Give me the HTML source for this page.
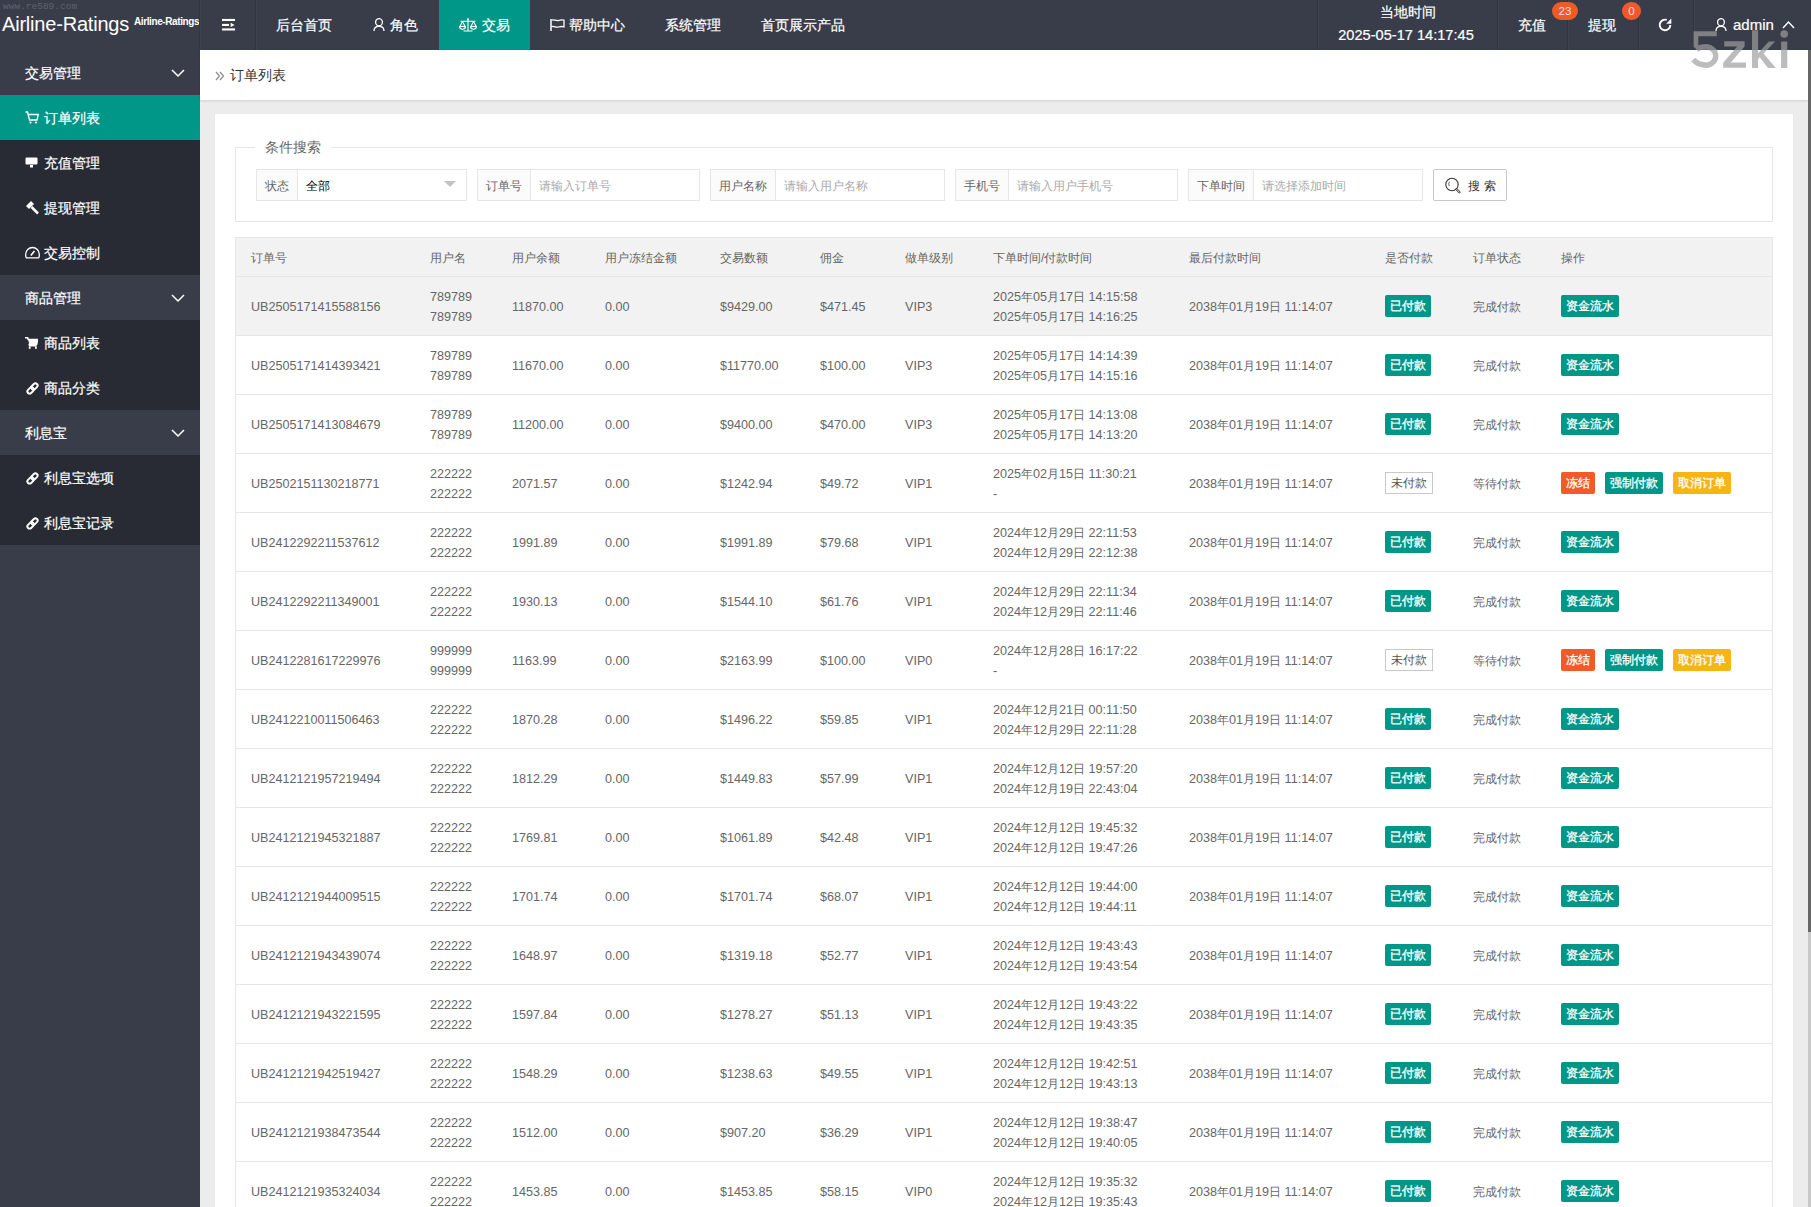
<!DOCTYPE html>
<html><head><meta charset="utf-8"><style>
*{margin:0;padding:0;box-sizing:border-box}
html,body{width:1811px;height:1207px;overflow:hidden;background:#ececec;font-family:"Liberation Sans",sans-serif;}
.abs{position:absolute}
#hdr{position:absolute;left:0;top:0;width:1811px;height:50px;background:#393d49;color:#fff}
#hdr .sep{position:absolute;top:0;width:1px;height:50px;background:#32353f;box-shadow:1px 0 0 #3f434e}
#hdr .nav{position:absolute;top:0;height:50px;line-height:50px;font-size:14px;color:#fff;white-space:nowrap;-webkit-text-stroke:0.2px #fff}
#logo{position:absolute;left:2px;top:13px;font-size:20px;color:#fff;white-space:nowrap;letter-spacing:-0.2px}
#logo2{position:absolute;left:134px;top:15.5px;font-size:10px;font-weight:bold;color:#fff;white-space:nowrap;letter-spacing:-0.4px}
#wm1{position:absolute;left:3px;top:1px;font-family:"Liberation Mono",monospace;font-size:9.5px;color:#5e626d;white-space:nowrap}
.badge{position:absolute;z-index:5;top:2px;height:18px;border-radius:9px;background:#ee5a28;color:#fde;font-size:11.5px;line-height:19px;text-align:center}
#side{position:absolute;left:0;top:50px;width:200px;height:1157px;background:#393d49}
.mi{position:absolute;left:0;width:200px;height:45px;line-height:45px;font-size:14px;color:#fff;white-space:nowrap;-webkit-text-stroke:0.2px #fff}
.mi.g{background:#393d49}
.mi.s{background:#282b33}
.mi.act{background:#009688}
.mi .t{position:absolute;left:25px;top:1px}
.mi .ts{position:absolute;left:44px;top:1px}
.mi svg{position:absolute}
#main{position:absolute;left:200px;top:50px;width:1608px;height:1157px;background:#ececec;overflow:hidden}
#crumb{position:absolute;left:200px;top:50px;width:1608px;height:50px;background:#fff;box-shadow:0 1px 2px rgba(0,0,0,.12)}
#crumb .t{position:absolute;left:30px;top:0;line-height:50px;font-size:14px;color:#333}
#card{position:absolute;left:215px;top:114px;width:1578px;height:1100px;background:#fff;box-shadow:0 0 1px rgba(0,0,0,.08)}
#fs{position:absolute;left:235px;top:147px;width:1538px;height:75px;border:1px solid #e6e6e6}
#legend{position:absolute;left:255px;top:137px;padding:0 10px;background:#fff;font-size:14px;line-height:20px;color:#666}
.lab{position:absolute;top:169px;height:32px;border:1px solid #e6e6e6;background:#fbfbfb;font-size:12px;line-height:32px;color:#666;text-align:center;white-space:nowrap}
.inp{position:absolute;top:169px;height:32px;border:1px solid #e6e6e6;border-left:none;background:#fff;font-size:12px;line-height:32px;color:#aaa;padding-left:8px;white-space:nowrap}
#sbtn{position:absolute;left:1433px;top:169px;width:74px;height:32px;border:1px solid #c9c9c9;background:#fff;font-size:12px;line-height:30px;color:#333;border-radius:2px}
#tbl{position:absolute;left:235px;top:237px;width:1538px;height:1000px;border:1px solid #e6e6e6;border-bottom:none}
#thead{position:absolute;left:235px;top:237px;width:1538px;height:40px;background:#f2f2f2;border:1px solid #e6e6e6}
.th{position:absolute;top:1px;line-height:38px;font-size:12px;color:#666;white-space:nowrap}
.tr{position:absolute;left:235px;width:1538px;height:59px;border:1px solid #e6e6e6;border-top:none;background:#fff}
.tr.hover{background:#f2f2f2}
.td{position:absolute;top:1px;line-height:58px;font-size:12.6px;color:#666;white-space:nowrap}
.td.two{line-height:20px;top:9.5px}
.td i,.td.cj{font-style:normal;font-size:12px}
.btn{position:absolute;top:18px;height:22px;line-height:22px;font-size:12px;-webkit-text-stroke:0.3px currentColor;color:#fff;text-align:center;border-radius:2px;white-space:nowrap}
.bg{background:#009688}
.br{background:#f25a29}
.by{background:#f7b515}
.bp{background:#fff;border:1px solid #c9c9c9;color:#555;line-height:20px;border-radius:0;-webkit-text-stroke:0}
#sb{position:absolute;left:1808px;top:50px;width:3px;height:1157px;background:#c8c8c8}
#sbt{position:absolute;left:1808px;top:50px;width:3px;height:882px;background:#666}

</style></head><body>
<div id="hdr">
  <div id="wm1">www.re589.com</div>
  <div id="logo">Airline-Ratings</div>
  <div id="logo2">Airline-Ratings</div>
  <div class="sep" style="left:199px"></div>
  <div class="sep" style="left:255px"></div>
  <svg class="abs" style="left:222px;top:18px" width="14" height="14" viewBox="0 0 14 14"><rect x="0" y="0.9" width="13" height="2.1" fill="#fff"/><rect x="0" y="5.9" width="7" height="2.1" fill="#fff"/><rect x="0" y="10.4" width="13" height="2.1" fill="#fff"/><path d="M8.6 4.8 L12.6 6.9 L8.6 9 Z" fill="#fff"/></svg>
  <div class="nav" style="left:276px">后台首页</div>
  <svg class="abs" style="left:373px;top:18px" width="12" height="13" viewBox="0 0 12 13"><ellipse cx="6" cy="4.2" rx="3.4" ry="3.6" fill="none" stroke="#fff" stroke-width="1.3"/><path d="M1 13 C1 9.5 3 8.3 6 8.3 C9 8.3 11 9.5 11 13" fill="none" stroke="#fff" stroke-width="1.3"/></svg>
  <div class="nav" style="left:390px">角色</div>
  <div class="abs" style="left:439px;top:0;width:91px;height:50px;background:#009688"></div>
  <svg class="abs" style="left:459px;top:18px" width="18" height="14" viewBox="0 0 18 14"><circle cx="9" cy="1.3" r="1.1" fill="#fff"/><path d="M9 2 V12.8 M4.5 13 H13.5 M1.5 3.3 H16.5 M3.5 3.5 L0.9 8.5 M3.5 3.5 L6.1 8.5 M14.5 3.5 L11.9 8.5 M14.5 3.5 L17.1 8.5" fill="none" stroke="#fff" stroke-width="1.1"/><path d="M0.6 8.5 H6.4 A2.9 2.7 0 0 1 0.6 8.5 Z M11.6 8.5 H17.4 A2.9 2.7 0 0 1 11.6 8.5 Z" fill="none" stroke="#fff" stroke-width="1.1"/></svg>
  <div class="nav" style="left:482px">交易</div>
  <svg class="abs" style="left:550px;top:19px" width="15" height="12" viewBox="0 0 15 12"><path d="M1 0 V12" stroke="#fff" stroke-width="1.5"/><path d="M1.5 1 C4 0 6 2.2 8.5 1.5 C10.5 0.8 12 0.8 14 1.2 V7.8 C12 7.2 10.5 7.4 8.5 8 C6 8.8 4 6.8 1.5 7.6" fill="none" stroke="#fff" stroke-width="1.3"/></svg>
  <div class="nav" style="left:569px">帮助中心</div>
  <div class="nav" style="left:665px">系统管理</div>
  <div class="nav" style="left:761px">首页展示产品</div>
  <div class="sep" style="left:1317px"></div>
  <div class="nav" style="left:1318px;width:180px;text-align:center;line-height:20px;top:2px">当地时间</div>
  <div class="nav" style="left:1316px;width:180px;text-align:center;line-height:20px;top:25px;font-size:14.6px">2025-05-17 14:17:45</div>
  <div class="sep" style="left:1497px"></div>
  <div class="nav" style="left:1518px">充值</div>
  <div class="badge" style="left:1552px;width:26px">23</div>
  <div class="sep" style="left:1567px"></div>
  <div class="nav" style="left:1588px">提现</div>
  <div class="badge" style="left:1622px;width:19px">0</div>
  <div class="sep" style="left:1638px"></div>
  <svg class="abs" style="left:1657px;top:17px" width="16" height="16" viewBox="0 0 16 16"><path d="M13.3 7.9 A5.3 5.3 0 1 1 9.7 2.9" fill="none" stroke="#fff" stroke-width="1.9"/><path d="M14.3 1.6 V6.7 H9.2 Z" fill="#fff"/></svg>
  <div class="sep" style="left:1693px"></div>
  <svg class="abs" style="left:1715px;top:18px" width="12" height="13" viewBox="0 0 12 13"><ellipse cx="6" cy="4.2" rx="3.4" ry="3.6" fill="none" stroke="#fff" stroke-width="1.3"/><path d="M1 13 C1 9.5 3 8.3 6 8.3 C9 8.3 11 9.5 11 13" fill="none" stroke="#fff" stroke-width="1.3"/></svg>
  <div class="nav" style="left:1733px;font-size:15px">admin</div>
  <svg class="abs" style="left:1782px;top:20px" width="13" height="9" viewBox="0 0 13 9"><path d="M1 8 L6.5 2 L12 8" fill="none" stroke="#fff" stroke-width="1.4"/></svg>
</div>
<div id="side">
  <div class="mi g" style="top:0"><span class="t">交易管理</span><svg style="left:171px;top:19px" width="14" height="9" viewBox="0 0 14 9"><path d="M1 1 L7 7 L13 1" fill="none" stroke="#fff" stroke-width="1.5"/></svg></div>
  <div class="mi act" style="top:45px"><svg style="left:25px;top:16px" width="14" height="13" viewBox="0 0 14 13"><path d="M0.5 1 H2.5 L4.5 9 H12 L13.3 3.5 H3.5" fill="none" stroke="#fff" stroke-width="1.3"/><circle cx="5.5" cy="11.5" r="1.1" fill="#fff"/><circle cx="11" cy="11.5" r="1.1" fill="#fff"/></svg><span class="ts">订单列表</span></div>
  <div class="mi s" style="top:90px"><svg style="left:25px;top:17px" width="13" height="11" viewBox="0 0 13 11"><rect x="0.5" y="0.5" width="12" height="7" rx="1" fill="#fff"/><rect x="5" y="8" width="3" height="2.5" fill="#fff"/></svg><span class="ts">充值管理</span></div>
  <div class="mi s" style="top:135px"><svg style="left:25px;top:16px" width="14" height="14" viewBox="0 0 14 14"><path d="M1 5 L6 0 L9 3 L4 8 Z" fill="#fff"/><path d="M6.5 6 L13 12.5" stroke="#fff" stroke-width="2.5"/></svg><span class="ts">提现管理</span></div>
  <div class="mi s" style="top:180px"><svg style="left:25px;top:16px" width="15" height="13" viewBox="0 0 15 13"><path d="M1.3 11.8 C0.5 10.8 0.7 9.5 0.7 8.3 A6.8 6.8 0 0 1 14.3 8.3 C14.3 9.5 14.5 10.8 13.7 11.8 Z" fill="none" stroke="#fff" stroke-width="1.3"/><path d="M5.8 9.5 L9.5 5" stroke="#fff" stroke-width="1.6"/></svg><span class="ts">交易控制</span></div>
  <div class="mi g" style="top:225px"><span class="t">商品管理</span><svg style="left:171px;top:19px" width="14" height="9" viewBox="0 0 14 9"><path d="M1 1 L7 7 L13 1" fill="none" stroke="#fff" stroke-width="1.5"/></svg></div>
  <div class="mi s" style="top:270px"><svg style="left:25px;top:17px" width="13" height="12" viewBox="0 0 13 12"><path d="M0 0.8 H2.6 L3.2 2.5 H12.8 L11.6 7.5 H4.3 L4.6 8.8 H11.5" fill="none" stroke="#fff" stroke-width="1.6"/><path d="M3.2 2.5 H12.8 L11.6 7.5 H4.3 Z" fill="#fff"/><rect x="3.8" y="9.5" width="1.8" height="2.3" fill="#fff"/><rect x="10" y="9.5" width="1.8" height="2.3" fill="#fff"/></svg><span class="ts">商品列表</span></div>
  <div class="mi s" style="top:315px"><svg style="left:25px;top:16px" width="15" height="15" viewBox="0 0 15 15"><g transform="rotate(-45 7.5 7.5)"><rect x="1.2" y="5.3" width="7.2" height="4.4" rx="2.2" fill="none" stroke="#fff" stroke-width="1.9"/><rect x="6.6" y="5.3" width="7.2" height="4.4" rx="2.2" fill="none" stroke="#fff" stroke-width="1.9"/></g></svg><span class="ts">商品分类</span></div>
  <div class="mi g" style="top:360px"><span class="t">利息宝</span><svg style="left:171px;top:19px" width="14" height="9" viewBox="0 0 14 9"><path d="M1 1 L7 7 L13 1" fill="none" stroke="#fff" stroke-width="1.5"/></svg></div>
  <div class="mi s" style="top:405px"><svg style="left:25px;top:16px" width="15" height="15" viewBox="0 0 15 15"><g transform="rotate(-45 7.5 7.5)"><rect x="1.2" y="5.3" width="7.2" height="4.4" rx="2.2" fill="none" stroke="#fff" stroke-width="1.9"/><rect x="6.6" y="5.3" width="7.2" height="4.4" rx="2.2" fill="none" stroke="#fff" stroke-width="1.9"/></g></svg><span class="ts">利息宝选项</span></div>
  <div class="mi s" style="top:450px"><svg style="left:25px;top:16px" width="15" height="15" viewBox="0 0 15 15"><g transform="rotate(-45 7.5 7.5)"><rect x="1.2" y="5.3" width="7.2" height="4.4" rx="2.2" fill="none" stroke="#fff" stroke-width="1.9"/><rect x="6.6" y="5.3" width="7.2" height="4.4" rx="2.2" fill="none" stroke="#fff" stroke-width="1.9"/></g></svg><span class="ts">利息宝记录</span></div>
</div>
<div id="crumb"><svg class="abs" style="left:15px;top:21px" width="10" height="10" viewBox="0 0 10 10"><path d="M1 1 L4.5 5 L1 9 M5 1 L8.5 5 L5 9" fill="none" stroke="#8a8a8a" stroke-width="1.2"/></svg><span class="t">订单列表</span></div>
<div id="card"></div>
<div id="fs"></div>
<div id="legend">条件搜索</div>
<div class="lab" style="left:256px;width:42px">状态</div>
<div class="inp" style="left:298px;width:169px;color:#000">全部</div>
<svg class="abs" style="left:444px;top:181px" width="12" height="7" viewBox="0 0 12 7"><path d="M0 0 H12 L6 6 Z" fill="#c2c2c2"/></svg>
<div class="lab" style="left:477px;width:54px">订单号</div>
<div class="inp" style="left:531px;width:169px">请输入订单号</div>
<div class="lab" style="left:710px;width:66px">用户名称</div>
<div class="inp" style="left:776px;width:169px">请输入用户名称</div>
<div class="lab" style="left:955px;width:54px">手机号</div>
<div class="inp" style="left:1009px;width:169px">请输入用户手机号</div>
<div class="lab" style="left:1188px;width:66px">下单时间</div>
<div class="inp" style="left:1254px;width:169px">请选择添加时间</div>
<div id="sbtn"><svg class="abs" style="left:10px;top:7px" width="18" height="18" viewBox="0 0 18 18"><circle cx="8" cy="7.5" r="6.2" fill="none" stroke="#333" stroke-width="1.1"/><path d="M5.5 4.8 A3.6 3.6 0 0 0 5.3 9" fill="none" stroke="#555" stroke-width="0.9"/><path d="M12.6 12.2 L15.4 15.2" stroke="#444" stroke-width="2.4" stroke-linecap="round"/><path d="M12.6 12.2 L15.4 15.2" stroke="#fff" stroke-width="0.8" stroke-linecap="round"/></svg><span class="abs" style="left:34px;top:1px;letter-spacing:3.5px">搜索</span></div>
<div id="tbl"></div>
<div id="thead"><div class="th" style="left:15px">订单号</div><div class="th" style="left:194px">用户名</div><div class="th" style="left:276px">用户余额</div><div class="th" style="left:369px">用户冻结金额</div><div class="th" style="left:484px">交易数额</div><div class="th" style="left:584px">佣金</div><div class="th" style="left:669px">做单级别</div><div class="th" style="left:757px">下单时间/付款时间</div><div class="th" style="left:953px">最后付款时间</div><div class="th" style="left:1149px">是否付款</div><div class="th" style="left:1237px">订单状态</div><div class="th" style="left:1325px">操作</div></div>
<div class="tr hover" style="top:277px"><div class="td c1" style="left:15px">UB2505171415588156</div><div class="td two" style="left:194px">789789<br>789789</div><div class="td" style="left:276px">11870.00</div><div class="td" style="left:369px">0.00</div><div class="td" style="left:484px">$9429.00</div><div class="td" style="left:584px">$471.45</div><div class="td" style="left:669px">VIP3</div><div class="td two" style="left:757px">2025<i>年</i>05<i>月</i>17<i>日</i> 14:15:58<br>2025<i>年</i>05<i>月</i>17<i>日</i> 14:16:25</div><div class="td" style="left:953px">2038<i>年</i>01<i>月</i>19<i>日</i> 11:14:07</div><div class="btn bg" style="left:1149px;width:46px">已付款</div><div class="td cj" style="left:1237px">完成付款</div><div class="btn bg" style="left:1325px;width:58px">资金流水</div></div>
<div class="tr" style="top:336px"><div class="td c1" style="left:15px">UB2505171414393421</div><div class="td two" style="left:194px">789789<br>789789</div><div class="td" style="left:276px">11670.00</div><div class="td" style="left:369px">0.00</div><div class="td" style="left:484px">$11770.00</div><div class="td" style="left:584px">$100.00</div><div class="td" style="left:669px">VIP3</div><div class="td two" style="left:757px">2025<i>年</i>05<i>月</i>17<i>日</i> 14:14:39<br>2025<i>年</i>05<i>月</i>17<i>日</i> 14:15:16</div><div class="td" style="left:953px">2038<i>年</i>01<i>月</i>19<i>日</i> 11:14:07</div><div class="btn bg" style="left:1149px;width:46px">已付款</div><div class="td cj" style="left:1237px">完成付款</div><div class="btn bg" style="left:1325px;width:58px">资金流水</div></div>
<div class="tr" style="top:395px"><div class="td c1" style="left:15px">UB2505171413084679</div><div class="td two" style="left:194px">789789<br>789789</div><div class="td" style="left:276px">11200.00</div><div class="td" style="left:369px">0.00</div><div class="td" style="left:484px">$9400.00</div><div class="td" style="left:584px">$470.00</div><div class="td" style="left:669px">VIP3</div><div class="td two" style="left:757px">2025<i>年</i>05<i>月</i>17<i>日</i> 14:13:08<br>2025<i>年</i>05<i>月</i>17<i>日</i> 14:13:20</div><div class="td" style="left:953px">2038<i>年</i>01<i>月</i>19<i>日</i> 11:14:07</div><div class="btn bg" style="left:1149px;width:46px">已付款</div><div class="td cj" style="left:1237px">完成付款</div><div class="btn bg" style="left:1325px;width:58px">资金流水</div></div>
<div class="tr" style="top:454px"><div class="td c1" style="left:15px">UB2502151130218771</div><div class="td two" style="left:194px">222222<br>222222</div><div class="td" style="left:276px">2071.57</div><div class="td" style="left:369px">0.00</div><div class="td" style="left:484px">$1242.94</div><div class="td" style="left:584px">$49.72</div><div class="td" style="left:669px">VIP1</div><div class="td two" style="left:757px">2025<i>年</i>02<i>月</i>15<i>日</i> 11:30:21<br>-</div><div class="td" style="left:953px">2038<i>年</i>01<i>月</i>19<i>日</i> 11:14:07</div><div class="btn bp" style="left:1149px;width:48px">未付款</div><div class="td cj" style="left:1237px">等待付款</div><div class="btn br" style="left:1325px;width:34px">冻结</div><div class="btn bg" style="left:1369px;width:58px">强制付款</div><div class="btn by" style="left:1437px;width:58px">取消订单</div></div>
<div class="tr" style="top:513px"><div class="td c1" style="left:15px">UB2412292211537612</div><div class="td two" style="left:194px">222222<br>222222</div><div class="td" style="left:276px">1991.89</div><div class="td" style="left:369px">0.00</div><div class="td" style="left:484px">$1991.89</div><div class="td" style="left:584px">$79.68</div><div class="td" style="left:669px">VIP1</div><div class="td two" style="left:757px">2024<i>年</i>12<i>月</i>29<i>日</i> 22:11:53<br>2024<i>年</i>12<i>月</i>29<i>日</i> 22:12:38</div><div class="td" style="left:953px">2038<i>年</i>01<i>月</i>19<i>日</i> 11:14:07</div><div class="btn bg" style="left:1149px;width:46px">已付款</div><div class="td cj" style="left:1237px">完成付款</div><div class="btn bg" style="left:1325px;width:58px">资金流水</div></div>
<div class="tr" style="top:572px"><div class="td c1" style="left:15px">UB2412292211349001</div><div class="td two" style="left:194px">222222<br>222222</div><div class="td" style="left:276px">1930.13</div><div class="td" style="left:369px">0.00</div><div class="td" style="left:484px">$1544.10</div><div class="td" style="left:584px">$61.76</div><div class="td" style="left:669px">VIP1</div><div class="td two" style="left:757px">2024<i>年</i>12<i>月</i>29<i>日</i> 22:11:34<br>2024<i>年</i>12<i>月</i>29<i>日</i> 22:11:46</div><div class="td" style="left:953px">2038<i>年</i>01<i>月</i>19<i>日</i> 11:14:07</div><div class="btn bg" style="left:1149px;width:46px">已付款</div><div class="td cj" style="left:1237px">完成付款</div><div class="btn bg" style="left:1325px;width:58px">资金流水</div></div>
<div class="tr" style="top:631px"><div class="td c1" style="left:15px">UB2412281617229976</div><div class="td two" style="left:194px">999999<br>999999</div><div class="td" style="left:276px">1163.99</div><div class="td" style="left:369px">0.00</div><div class="td" style="left:484px">$2163.99</div><div class="td" style="left:584px">$100.00</div><div class="td" style="left:669px">VIP0</div><div class="td two" style="left:757px">2024<i>年</i>12<i>月</i>28<i>日</i> 16:17:22<br>-</div><div class="td" style="left:953px">2038<i>年</i>01<i>月</i>19<i>日</i> 11:14:07</div><div class="btn bp" style="left:1149px;width:48px">未付款</div><div class="td cj" style="left:1237px">等待付款</div><div class="btn br" style="left:1325px;width:34px">冻结</div><div class="btn bg" style="left:1369px;width:58px">强制付款</div><div class="btn by" style="left:1437px;width:58px">取消订单</div></div>
<div class="tr" style="top:690px"><div class="td c1" style="left:15px">UB2412210011506463</div><div class="td two" style="left:194px">222222<br>222222</div><div class="td" style="left:276px">1870.28</div><div class="td" style="left:369px">0.00</div><div class="td" style="left:484px">$1496.22</div><div class="td" style="left:584px">$59.85</div><div class="td" style="left:669px">VIP1</div><div class="td two" style="left:757px">2024<i>年</i>12<i>月</i>21<i>日</i> 00:11:50<br>2024<i>年</i>12<i>月</i>29<i>日</i> 22:11:28</div><div class="td" style="left:953px">2038<i>年</i>01<i>月</i>19<i>日</i> 11:14:07</div><div class="btn bg" style="left:1149px;width:46px">已付款</div><div class="td cj" style="left:1237px">完成付款</div><div class="btn bg" style="left:1325px;width:58px">资金流水</div></div>
<div class="tr" style="top:749px"><div class="td c1" style="left:15px">UB2412121957219494</div><div class="td two" style="left:194px">222222<br>222222</div><div class="td" style="left:276px">1812.29</div><div class="td" style="left:369px">0.00</div><div class="td" style="left:484px">$1449.83</div><div class="td" style="left:584px">$57.99</div><div class="td" style="left:669px">VIP1</div><div class="td two" style="left:757px">2024<i>年</i>12<i>月</i>12<i>日</i> 19:57:20<br>2024<i>年</i>12<i>月</i>19<i>日</i> 22:43:04</div><div class="td" style="left:953px">2038<i>年</i>01<i>月</i>19<i>日</i> 11:14:07</div><div class="btn bg" style="left:1149px;width:46px">已付款</div><div class="td cj" style="left:1237px">完成付款</div><div class="btn bg" style="left:1325px;width:58px">资金流水</div></div>
<div class="tr" style="top:808px"><div class="td c1" style="left:15px">UB2412121945321887</div><div class="td two" style="left:194px">222222<br>222222</div><div class="td" style="left:276px">1769.81</div><div class="td" style="left:369px">0.00</div><div class="td" style="left:484px">$1061.89</div><div class="td" style="left:584px">$42.48</div><div class="td" style="left:669px">VIP1</div><div class="td two" style="left:757px">2024<i>年</i>12<i>月</i>12<i>日</i> 19:45:32<br>2024<i>年</i>12<i>月</i>12<i>日</i> 19:47:26</div><div class="td" style="left:953px">2038<i>年</i>01<i>月</i>19<i>日</i> 11:14:07</div><div class="btn bg" style="left:1149px;width:46px">已付款</div><div class="td cj" style="left:1237px">完成付款</div><div class="btn bg" style="left:1325px;width:58px">资金流水</div></div>
<div class="tr" style="top:867px"><div class="td c1" style="left:15px">UB2412121944009515</div><div class="td two" style="left:194px">222222<br>222222</div><div class="td" style="left:276px">1701.74</div><div class="td" style="left:369px">0.00</div><div class="td" style="left:484px">$1701.74</div><div class="td" style="left:584px">$68.07</div><div class="td" style="left:669px">VIP1</div><div class="td two" style="left:757px">2024<i>年</i>12<i>月</i>12<i>日</i> 19:44:00<br>2024<i>年</i>12<i>月</i>12<i>日</i> 19:44:11</div><div class="td" style="left:953px">2038<i>年</i>01<i>月</i>19<i>日</i> 11:14:07</div><div class="btn bg" style="left:1149px;width:46px">已付款</div><div class="td cj" style="left:1237px">完成付款</div><div class="btn bg" style="left:1325px;width:58px">资金流水</div></div>
<div class="tr" style="top:926px"><div class="td c1" style="left:15px">UB2412121943439074</div><div class="td two" style="left:194px">222222<br>222222</div><div class="td" style="left:276px">1648.97</div><div class="td" style="left:369px">0.00</div><div class="td" style="left:484px">$1319.18</div><div class="td" style="left:584px">$52.77</div><div class="td" style="left:669px">VIP1</div><div class="td two" style="left:757px">2024<i>年</i>12<i>月</i>12<i>日</i> 19:43:43<br>2024<i>年</i>12<i>月</i>12<i>日</i> 19:43:54</div><div class="td" style="left:953px">2038<i>年</i>01<i>月</i>19<i>日</i> 11:14:07</div><div class="btn bg" style="left:1149px;width:46px">已付款</div><div class="td cj" style="left:1237px">完成付款</div><div class="btn bg" style="left:1325px;width:58px">资金流水</div></div>
<div class="tr" style="top:985px"><div class="td c1" style="left:15px">UB2412121943221595</div><div class="td two" style="left:194px">222222<br>222222</div><div class="td" style="left:276px">1597.84</div><div class="td" style="left:369px">0.00</div><div class="td" style="left:484px">$1278.27</div><div class="td" style="left:584px">$51.13</div><div class="td" style="left:669px">VIP1</div><div class="td two" style="left:757px">2024<i>年</i>12<i>月</i>12<i>日</i> 19:43:22<br>2024<i>年</i>12<i>月</i>12<i>日</i> 19:43:35</div><div class="td" style="left:953px">2038<i>年</i>01<i>月</i>19<i>日</i> 11:14:07</div><div class="btn bg" style="left:1149px;width:46px">已付款</div><div class="td cj" style="left:1237px">完成付款</div><div class="btn bg" style="left:1325px;width:58px">资金流水</div></div>
<div class="tr" style="top:1044px"><div class="td c1" style="left:15px">UB2412121942519427</div><div class="td two" style="left:194px">222222<br>222222</div><div class="td" style="left:276px">1548.29</div><div class="td" style="left:369px">0.00</div><div class="td" style="left:484px">$1238.63</div><div class="td" style="left:584px">$49.55</div><div class="td" style="left:669px">VIP1</div><div class="td two" style="left:757px">2024<i>年</i>12<i>月</i>12<i>日</i> 19:42:51<br>2024<i>年</i>12<i>月</i>12<i>日</i> 19:43:13</div><div class="td" style="left:953px">2038<i>年</i>01<i>月</i>19<i>日</i> 11:14:07</div><div class="btn bg" style="left:1149px;width:46px">已付款</div><div class="td cj" style="left:1237px">完成付款</div><div class="btn bg" style="left:1325px;width:58px">资金流水</div></div>
<div class="tr" style="top:1103px"><div class="td c1" style="left:15px">UB2412121938473544</div><div class="td two" style="left:194px">222222<br>222222</div><div class="td" style="left:276px">1512.00</div><div class="td" style="left:369px">0.00</div><div class="td" style="left:484px">$907.20</div><div class="td" style="left:584px">$36.29</div><div class="td" style="left:669px">VIP1</div><div class="td two" style="left:757px">2024<i>年</i>12<i>月</i>12<i>日</i> 19:38:47<br>2024<i>年</i>12<i>月</i>12<i>日</i> 19:40:05</div><div class="td" style="left:953px">2038<i>年</i>01<i>月</i>19<i>日</i> 11:14:07</div><div class="btn bg" style="left:1149px;width:46px">已付款</div><div class="td cj" style="left:1237px">完成付款</div><div class="btn bg" style="left:1325px;width:58px">资金流水</div></div>
<div class="tr" style="top:1162px"><div class="td c1" style="left:15px">UB2412121935324034</div><div class="td two" style="left:194px">222222<br>222222</div><div class="td" style="left:276px">1453.85</div><div class="td" style="left:369px">0.00</div><div class="td" style="left:484px">$1453.85</div><div class="td" style="left:584px">$58.15</div><div class="td" style="left:669px">VIP0</div><div class="td two" style="left:757px">2024<i>年</i>12<i>月</i>12<i>日</i> 19:35:32<br>2024<i>年</i>12<i>月</i>12<i>日</i> 19:35:43</div><div class="td" style="left:953px">2038<i>年</i>01<i>月</i>19<i>日</i> 11:14:07</div><div class="btn bg" style="left:1149px;width:46px">已付款</div><div class="td cj" style="left:1237px">完成付款</div><div class="btn bg" style="left:1325px;width:58px">资金流水</div></div>
<svg id="wm2" width="115" height="48" viewBox="0 0 115 48" style="position:absolute;left:1680px;top:25px;z-index:20"><g opacity=".69"><path d="M13.6 6.2 H36.8 V11.3 H18.3 V22.5 H13.6 Z M44.3 16.3 H64.6 V21.6 L50.8 37.5 H66.0 V42.8 H43.2 V37.8 L57.2 21.4 H44.3 Z M72.0 5.3 H78.1 V28.2 L88.8 16.5 H95.2 L83.6 28.4 L95.8 42.9 H88.0 L79.7 32.3 L78.1 33.9 V42.9 H72.0 Z M101.1 16.4 H107.3 V42.9 H101.1 Z" fill="#9f9f9f"/><path d="M16.5 24.6 C19.0 22.6 22.5 21.8 27.0 21.8 A9.75 9.25 0 0 1 27.0 40.2 C20.5 40.2 16.0 38.0 13.3 34.5" fill="none" stroke="#9f9f9f" stroke-width="5.4"/><circle cx="104.2" cy="9.0" r="3.8" fill="#9f9f9f"/></g></svg>
<div id="sb"></div><div id="sbt"></div>
</body></html>
